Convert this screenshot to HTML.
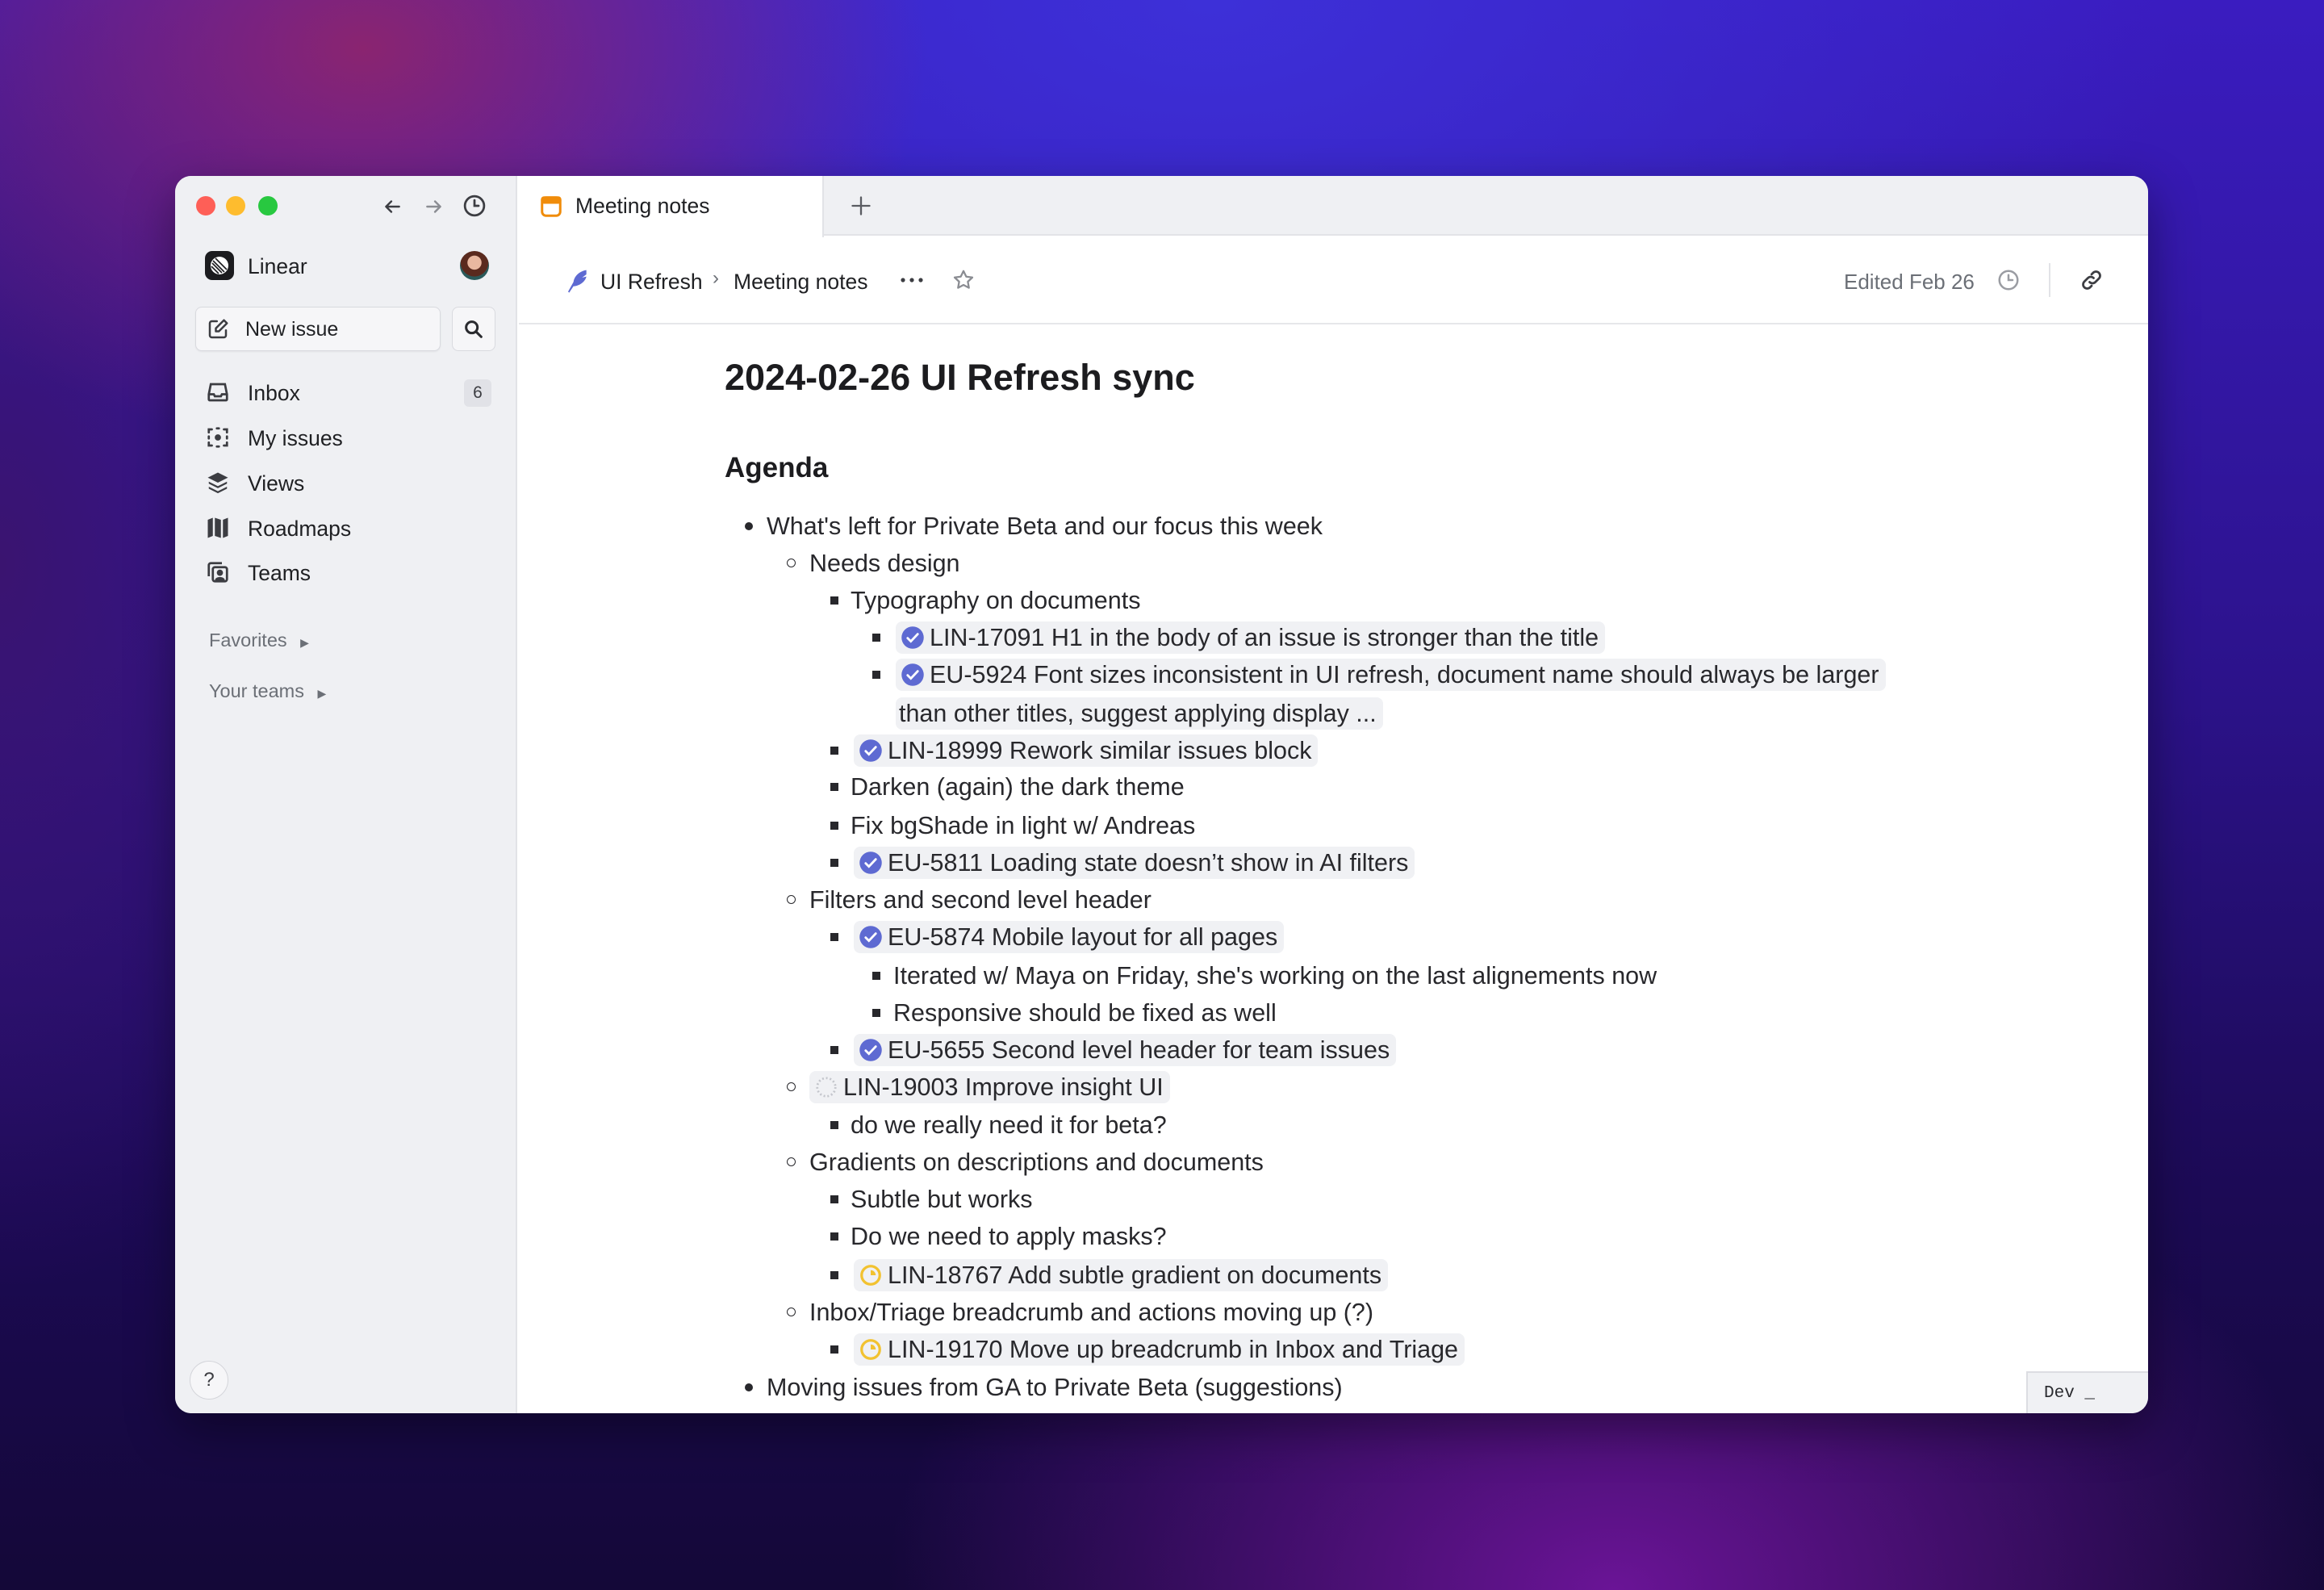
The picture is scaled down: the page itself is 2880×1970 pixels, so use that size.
<!DOCTYPE html>
<html><head><meta charset="utf-8"><style>
*{margin:0;padding:0;box-sizing:border-box}
html,body{width:2880px;height:1970px;overflow:hidden}
body{font-family:"Liberation Sans",sans-serif;position:relative;
background:
radial-gradient(ellipse 700px 500px at 450px 60px,#8a2470 0%,rgba(138,36,112,0) 100%),
radial-gradient(ellipse 500px 900px at 0px 700px,#3a1470 0%,rgba(58,20,112,0) 100%),
radial-gradient(ellipse 1200px 700px at 1500px 0px,#3d30d8 0%,rgba(61,48,216,0) 100%),
radial-gradient(ellipse 900px 600px at 2000px 1970px,#6a1496 0%,rgba(106,20,150,0) 100%),
linear-gradient(180deg,#3a1cc0 0%,#2d138f 40%,#1c0a55 75%,#140838 100%);}
.win{position:absolute;left:217px;top:218px;width:2445px;height:1533px;border-radius:20px;overflow:hidden;background:#fff;box-shadow:0 20px 60px rgba(0,0,0,.4)}
.side{position:absolute;left:0;top:0;width:424px;height:100%;background:#eff0f3;border-right:2px solid #e2e3e7}
.abs{position:absolute;white-space:nowrap}
.tl{position:absolute;top:25px;width:24px;height:24px;border-radius:50%}
.item{position:absolute;left:90px;font-size:26.5px;color:#1f2023;line-height:40px}
.ico{position:absolute;left:38px}
.sec{position:absolute;left:42px;font-size:23.5px;color:#6b6f76}
.tabbar{position:absolute;left:426px;top:0;right:0;height:74px;background:#eff0f3;border-bottom:2px solid #e2e3e7}
.tab{position:absolute;left:426px;top:0;width:378px;height:76px;background:#fff;border-right:2px solid #e2e3e7}
.hdr{position:absolute;left:426px;right:0;top:182px;border-top:2px solid #e6e7ea}
.doc{position:absolute;left:0;top:0;font-size:30.5px;color:#28282c;white-space:nowrap}
.ln{position:absolute;white-space:nowrap;line-height:40px;height:40px}
.pill{background:#f0f1f4;border-radius:8px;padding:0 8px 0 6px;display:inline-flex;align-items:center;height:40px}
.pill svg{margin-right:6px}
.b1,.b2,.b3{position:absolute;}
.b1{width:10px;height:10px;border-radius:50%;background:#28282c}
.b2{width:11px;height:11px;border-radius:50%;border:1.8px solid #28282c}
.b3{width:10px;height:10px;background:#28282c}
</style></head><body>
<div class="win">
 <div class="side">
  <div class="tl" style="left:26px;background:#fe5f57"></div>
  <div class="tl" style="left:63px;background:#febc2e"></div>
  <div class="tl" style="left:103px;background:#28c840"></div>
  <svg class="abs" style="left:256px;top:25px" width="26" height="26" viewBox="0 0 24 24" fill="none" stroke="#3c3d42" stroke-width="2.2" stroke-linecap="round" stroke-linejoin="round"><path d="M20 12H5M11 6l-6 6 6 6"/></svg>
  <svg class="abs" style="left:308px;top:25px" width="26" height="26" viewBox="0 0 24 24" fill="none" stroke="#8a8c92" stroke-width="2.2" stroke-linecap="round" stroke-linejoin="round"><path d="M4 12h15M13 6l6 6-6 6"/></svg>
  <svg class="abs" style="left:356px;top:22px" width="30" height="30" viewBox="0 0 24 24" fill="none" stroke="#3c3d42" stroke-width="2.2" stroke-linecap="round"><circle cx="12" cy="12" r="9.5"/><path d="M12 6.5V12h4"/></svg>
  <div class="abs" style="left:37px;top:93px;width:36px;height:36px;border-radius:9px;background:#1c1c1f"><svg width="36" height="36" viewBox="0 0 36 36"><circle cx="18" cy="18" r="11" fill="#fff"/><path d="M9 15l12 12M8 19l9 9M10 12l14 14M13 9l14 14" stroke="#1c1c1f" stroke-width="1.6"/></svg></div>
  <div class="item" style="left:90px;top:92px">Linear</div>
  <div class="abs" style="left:353px;top:93px;width:36px;height:36px;border-radius:50%;background:radial-gradient(circle at 50% 40%,#e9b8a0 0 30%,#5a2a1e 32% 60%,#2a5a5a 62%)"></div>
  <div class="abs" style="left:25px;top:162px;width:304px;height:55px;border-radius:8px;background:#f6f6f8;border:1.5px solid #d9dadf;box-shadow:0 1px 2px rgba(0,0,0,.06)"></div>
  <svg class="abs" style="left:38px;top:175px" width="30" height="30" viewBox="0 0 24 24" fill="none" stroke="#3c3d42" stroke-width="2" stroke-linecap="round" stroke-linejoin="round"><path d="M11 4H6a2 2 0 0 0-2 2v12a2 2 0 0 0 2 2h12a2 2 0 0 0 2-2v-5"/><path d="M18 3l3 3-8 8H10v-3z"/></svg>
  <div class="item" style="left:87px;top:170px;font-size:25px">New issue</div>
  <div class="abs" style="left:343px;top:162px;width:54px;height:55px;border-radius:8px;background:#f6f6f8;border:1.5px solid #d9dadf"></div>
  <svg class="abs" style="left:356px;top:176px" width="28" height="28" viewBox="0 0 24 24" fill="none" stroke="#2a2b2f" stroke-width="2.6" stroke-linecap="round"><circle cx="10" cy="10" r="6"/><path d="M15 15l5 5"/></svg>
  <svg class="ico" style="top:253px" width="30" height="30" viewBox="0 0 24 24" fill="none" stroke="#3c3d42" stroke-width="2.2"><path d="M5 4h14l2 10v5a1 1 0 0 1-1 1H4a1 1 0 0 1-1-1v-5z"/><path d="M3 14h5l1 2h6l1-2h5" /></svg>
  <div class="item" style="top:249px">Inbox</div>
  <div class="abs" style="left:358px;top:252px;width:34px;height:34px;border-radius:6px;background:#e1e2e7;font-size:21px;color:#3c3d42;text-align:center;line-height:34px">6</div>
  <svg class="ico" style="top:309px" width="30" height="30" viewBox="0 0 24 24" fill="none" stroke="#3c3d42" stroke-width="2.2" stroke-linecap="round"><path d="M3 7V4h3M18 4h3v3M21 17v3h-3M6 20H3v-3M3 11v2M21 11v2M11 3h2M11 21h2"/><circle cx="12" cy="12" r="2" fill="#3c3d42"/></svg>
  <div class="item" style="top:305px">My issues</div>
  <svg class="ico" style="top:365px" width="30" height="30" viewBox="0 0 24 24" fill="#3c3d42"><path d="M12 2l10 5-10 5L2 7z"/><path d="M3 11l9 4.5 9-4.5v2l-9 4.5L3 13z"/><path d="M3 16l9 4.5 9-4.5v2l-9 4.5L3 18z"/></svg>
  <div class="item" style="top:361px">Views</div>
  <svg class="ico" style="top:421px" width="30" height="30" viewBox="0 0 24 24" fill="#3c3d42"><path d="M2 4l5-2v18l-5 2zM9 2l6 2v18l-6-2zM17 4l5-2v18l-5 2z"/></svg>
  <div class="item" style="top:417px">Roadmaps</div>
  <svg class="ico" style="top:476px" width="30" height="30" viewBox="0 0 24 24" fill="none" stroke="#3c3d42" stroke-width="2.2"><path d="M16 3H5a2 2 0 0 0-2 2v11"/><rect x="7" y="7" width="14" height="14" rx="2"/><circle cx="14" cy="12.5" r="2" fill="#3c3d42"/><path d="M10 20c1-3 7-3 8 0" fill="#3c3d42"/></svg>
  <div class="item" style="top:472px">Teams</div>
  <div class="sec" style="top:562px">Favorites <span style="font-size:14px;margin-left:10px">▶</span></div>
  <div class="sec" style="top:625px">Your teams <span style="font-size:14px;margin-left:10px">▶</span></div>
  <div class="abs" style="left:18px;top:1468px;width:48px;height:48px;border-radius:50%;border:1.5px solid #d4d5da;background:#f6f6f8;text-align:center;line-height:45px;font-size:24px;color:#3c3d42">?</div>
 </div>
 <div class="tabbar"></div>
 <div class="tab">
  <svg class="abs" style="left:25px;top:23px" width="30" height="30" viewBox="0 0 24 24" fill="none" stroke="#f08c0a" stroke-width="2.4"><rect x="3" y="3" width="18" height="18" rx="4"/><rect x="3" y="3" width="18" height="5" rx="2" fill="#f08c0a"/></svg>
  <div class="abs" style="left:70px;top:22px;font-size:26.5px;color:#1f2023">Meeting notes</div>
 </div>
 <svg class="abs" style="left:836px;top:23px" width="28" height="28" viewBox="0 0 24 24" stroke="#5a5c62" stroke-width="2" stroke-linecap="round"><path d="M12 3v18M3 12h18"/></svg>
 <svg class="abs" style="left:483px;top:114px" width="32" height="32" viewBox="0 0 24 24" fill="#5e6ad2"><path d="M20 2c-6 1-11 5-12 11l-5 9 1 1 4-6c5 0 11-4 12-9l-4 1 4-3z"/></svg>
 <div class="abs" style="left:527px;top:116px;font-size:26.5px;color:#1f2023">UI Refresh</div>
 <div class="abs" style="left:666px;top:113px;font-size:24px;color:#6b6f76">›</div>
 <div class="abs" style="left:692px;top:116px;font-size:26.5px;color:#1f2023">Meeting notes</div>
 <svg class="abs" style="left:898px;top:124px" width="30" height="10" viewBox="0 0 30 10" fill="#3c3d42"><circle cx="4" cy="5" r="2.6"/><circle cx="15" cy="5" r="2.6"/><circle cx="26" cy="5" r="2.6"/></svg>
 <svg class="abs" style="left:962px;top:114px" width="30" height="30" viewBox="0 0 24 24" fill="none" stroke="#8a8c92" stroke-width="1.8" stroke-linejoin="round"><path d="M12 3l2.7 5.6 6.1.8-4.5 4.2 1.1 6.1L12 16.8 6.6 19.7l1.1-6.1L3.2 9.4l6.1-.8z"/></svg>
 <div class="abs" style="left:2068px;top:116px;font-size:26px;color:#6b6f76">Edited Feb 26</div>
 <svg class="abs" style="left:2257px;top:114px" width="30" height="30" viewBox="0 0 24 24" fill="none" stroke="#9a9ca2" stroke-width="2" stroke-linecap="round"><circle cx="12" cy="12" r="9"/><path d="M12 7v5h4"/></svg>
 <div class="abs" style="left:2322px;top:108px;width:2px;height:42px;background:#e2e3e7"></div>
 <svg class="abs" style="left:2360px;top:114px" width="30" height="30" viewBox="0 0 24 24" fill="none" stroke="#3c3d42" stroke-width="2.2" stroke-linecap="round"><path d="M10 14a4 4 0 0 0 5.7 0l3.5-3.5a4 4 0 0 0-5.7-5.7L12 6.3"/><path d="M14 10a4 4 0 0 0-5.7 0l-3.5 3.5a4 4 0 0 0 5.7 5.7l1.5-1.5"/></svg>
 <div class="hdr"></div>

 <div class="doc">
  <div class="abs" style="left:681px;top:224px;font-size:45px;font-weight:bold;color:#1c1c1f">2024-02-26 UI Refresh sync</div>
  <div class="abs" style="left:681px;top:342px;font-size:35px;font-weight:bold;color:#1c1c1f">Agenda</div>
 </div>
 <div class="doc" style="left:-217px;top:-218px">
  <div class="b1" style="left:923px;top:647px"></div><div class="ln" style="left:950px;top:632px">What's left for Private Beta and our focus this week</div>
  <div class="b2" style="left:975px;top:692px"></div><div class="ln" style="left:1003px;top:678px">Needs design</div>
  <div class="b3" style="left:1029px;top:739px"></div><div class="ln" style="left:1054px;top:724px">Typography on documents</div>
  <div class="b3" style="left:1081px;top:785px"></div><div class="ln" style="left:1110px;top:770px"><span class="pill"><svg width="30" height="30" viewBox="0 0 24 24"><circle cx="12" cy="12" r="11" fill="#5e6ad2"/><path d="M7 12.5l3.2 3.2L17 8.5" stroke="#fff" stroke-width="2.2" fill="none" stroke-linecap="round"/></svg>LIN-17091 H1 in the body of an issue is stronger than the title</span></div>
  <div class="b3" style="left:1081px;top:831px"></div><div class="ln" style="left:1110px;top:816px"><span class="pill"><svg width="30" height="30" viewBox="0 0 24 24"><circle cx="12" cy="12" r="11" fill="#5e6ad2"/><path d="M7 12.5l3.2 3.2L17 8.5" stroke="#fff" stroke-width="2.2" fill="none" stroke-linecap="round"/></svg>EU-5924 Font sizes inconsistent in UI refresh, document name should always be larger</span></div>
  <div class="ln" style="left:1110px;top:864px"><span class="pill" style="padding-left:4px">than other titles, suggest applying display ...</span></div>
  <div class="b3" style="left:1029px;top:925px"></div><div class="ln" style="left:1058px;top:910px"><span class="pill"><svg width="30" height="30" viewBox="0 0 24 24"><circle cx="12" cy="12" r="11" fill="#5e6ad2"/><path d="M7 12.5l3.2 3.2L17 8.5" stroke="#fff" stroke-width="2.2" fill="none" stroke-linecap="round"/></svg>LIN-18999 Rework similar issues block</span></div>
  <div class="b3" style="left:1029px;top:970px"></div><div class="ln" style="left:1054px;top:955px">Darken (again) the dark theme</div>
  <div class="b3" style="left:1029px;top:1018px"></div><div class="ln" style="left:1054px;top:1003px">Fix bgShade in light w/ Andreas</div>
  <div class="b3" style="left:1029px;top:1064px"></div><div class="ln" style="left:1058px;top:1049px"><span class="pill"><svg width="30" height="30" viewBox="0 0 24 24"><circle cx="12" cy="12" r="11" fill="#5e6ad2"/><path d="M7 12.5l3.2 3.2L17 8.5" stroke="#fff" stroke-width="2.2" fill="none" stroke-linecap="round"/></svg>EU-5811 Loading state doesn’t show in AI filters</span></div>
  <div class="b2" style="left:975px;top:1109px"></div><div class="ln" style="left:1003px;top:1095px">Filters and second level header</div>
  <div class="b3" style="left:1029px;top:1156px"></div><div class="ln" style="left:1058px;top:1141px"><span class="pill"><svg width="30" height="30" viewBox="0 0 24 24"><circle cx="12" cy="12" r="11" fill="#5e6ad2"/><path d="M7 12.5l3.2 3.2L17 8.5" stroke="#fff" stroke-width="2.2" fill="none" stroke-linecap="round"/></svg>EU-5874 Mobile layout for all pages</span></div>
  <div class="b3" style="left:1081px;top:1204px"></div><div class="ln" style="left:1107px;top:1189px">Iterated w/ Maya on Friday, she's working on the last alignements now</div>
  <div class="b3" style="left:1081px;top:1250px"></div><div class="ln" style="left:1107px;top:1235px">Responsive should be fixed as well</div>
  <div class="b3" style="left:1029px;top:1296px"></div><div class="ln" style="left:1058px;top:1281px"><span class="pill"><svg width="30" height="30" viewBox="0 0 24 24"><circle cx="12" cy="12" r="11" fill="#5e6ad2"/><path d="M7 12.5l3.2 3.2L17 8.5" stroke="#fff" stroke-width="2.2" fill="none" stroke-linecap="round"/></svg>EU-5655 Second level header for team issues</span></div>
  <div class="b2" style="left:975px;top:1341px"></div><div class="ln" style="left:1003px;top:1327px"><span class="pill"><svg width="30" height="30" viewBox="0 0 24 24"><circle cx="12" cy="12" r="9" fill="none" stroke="#c4c6cc" stroke-width="2.2" stroke-dasharray="1.6 2.2"/></svg>LIN-19003 Improve insight UI</span></div>
  <div class="b3" style="left:1029px;top:1389px"></div><div class="ln" style="left:1054px;top:1374px">do we really need it for beta?</div>
  <div class="b2" style="left:975px;top:1434px"></div><div class="ln" style="left:1003px;top:1420px">Gradients on descriptions and documents</div>
  <div class="b3" style="left:1029px;top:1481px"></div><div class="ln" style="left:1054px;top:1466px">Subtle but works</div>
  <div class="b3" style="left:1029px;top:1527px"></div><div class="ln" style="left:1054px;top:1512px">Do we need to apply masks?</div>
  <div class="b3" style="left:1029px;top:1575px"></div><div class="ln" style="left:1058px;top:1560px"><span class="pill"><svg width="30" height="30" viewBox="0 0 24 24"><circle cx="12" cy="12" r="9" fill="none" stroke="#f2c230" stroke-width="2.6"/><path d="M12 12V7a5 5 0 0 1 5 5z" fill="#f2c230"/></svg>LIN-18767 Add subtle gradient on documents</span></div>
  <div class="b2" style="left:975px;top:1620px"></div><div class="ln" style="left:1003px;top:1606px">Inbox/Triage breadcrumb and actions moving up (?)</div>
  <div class="b3" style="left:1029px;top:1667px"></div><div class="ln" style="left:1058px;top:1652px"><span class="pill"><svg width="30" height="30" viewBox="0 0 24 24"><circle cx="12" cy="12" r="9" fill="none" stroke="#f2c230" stroke-width="2.6"/><path d="M12 12V7a5 5 0 0 1 5 5z" fill="#f2c230"/></svg>LIN-19170 Move up breadcrumb in Inbox and Triage</span></div>
  <div class="b1" style="left:923px;top:1714px"></div><div class="ln" style="left:950px;top:1699px">Moving issues from GA to Private Beta (suggestions)</div>
 </div>
 <div class="abs" style="left:2294px;top:1481px;width:151px;height:52px;background:#f0f1f4;border-top:2px solid #dcdde2;border-left:2px solid #dcdde2;font-family:'Liberation Mono',monospace;font-size:21px;color:#2a2b2f;padding:14px 0 0 20px">Dev _</div>
</div>
</body></html>
